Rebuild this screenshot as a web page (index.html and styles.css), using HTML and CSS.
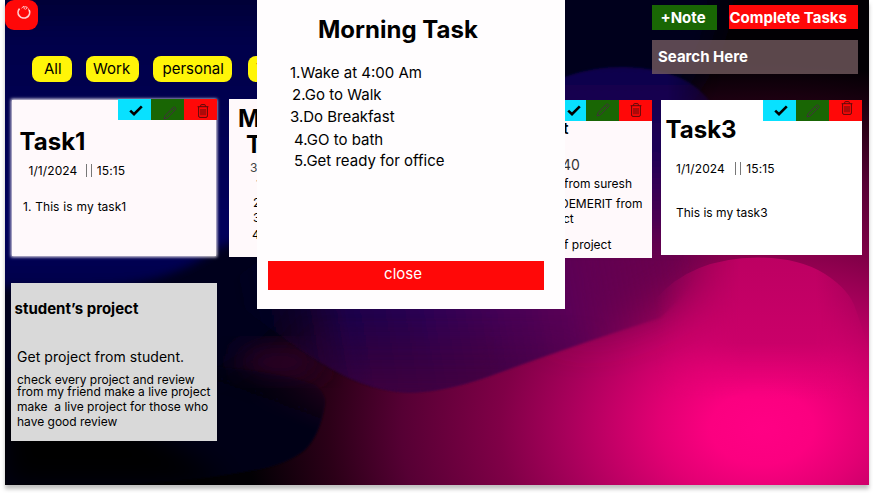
FILE: index.html
```html
<!DOCTYPE html>
<html lang="en">
<head>
<meta charset="utf-8">
<title>Tasks</title>
<link rel="stylesheet" href="styles.css">
</head>
<body>
<svg width="0" height="0" class="defs" aria-hidden="true">
  <symbol id="check" viewBox="0 0 14 11"><path d="M1.2 5.6 5 9.2 12.8 1.4" fill="none" stroke="#000" stroke-width="2.6"/></symbol>
  <symbol id="pen" viewBox="0 0 14 14"><path d="M1 13 2.2 9.4 10.4 1.3Q11.3.6 12.2 1.5L12.6 1.9Q13.4 2.8 12.6 3.6L4.5 11.8ZM9.2 2.6 11.4 4.8" fill="none" stroke="#42303c" stroke-width="1" stroke-linejoin="round"/></symbol>
  <symbol id="trash" viewBox="0 0 12 14"><path d="M.6 2.7H11.4M3.7 2.5V1.4Q3.7.6 4.5.6H7.5Q8.3.6 8.3 1.4V2.5M1.6 2.9V12Q1.6 13.4 3 13.4H9Q10.4 13.4 10.4 12V2.9M4 5V11.3M6 5V11.3M8 5V11.3" fill="none" stroke="#4a0b0b" stroke-width=".9"/></symbol>
</svg>
<main class="app">
  <svg class="backdrop" viewBox="5 0 864 485" preserveAspectRatio="none" aria-hidden="true">
    <defs>
      <radialGradient id="pink" gradientUnits="userSpaceOnUse" cx="0" cy="0" r="1" gradientTransform="translate(762 428) scale(515 365)">
        <stop offset="0" stop-color="#ff0084"/><stop offset=".1" stop-color="#fb0080"/><stop offset=".2" stop-color="#e20073"/><stop offset=".38" stop-color="#a8005b"/><stop offset=".51" stop-color="#800047"/><stop offset=".7" stop-color="#560034"/><stop offset=".84" stop-color="#2c0018"/><stop offset="1" stop-color="#020004"/>
      </radialGradient>
      <linearGradient id="navy" x1="0" y1="0" x2="0" y2="1">
        <stop offset="0" stop-color="#00002e"/><stop offset=".2" stop-color="#00004a"/><stop offset=".8" stop-color="#00005c"/><stop offset="1" stop-color="#00004a"/>
      </linearGradient>
      <linearGradient id="violet" gradientUnits="userSpaceOnUse" x1="240" y1="330" x2="690" y2="250">
        <stop offset="0" stop-color="#0c0028" stop-opacity="0"/><stop offset=".24" stop-color="#1d004a"/><stop offset=".4" stop-color="#2c0052"/><stop offset=".72" stop-color="#5b0056"/><stop offset="1" stop-color="#6c0048" stop-opacity="0"/>
      </linearGradient>
      <linearGradient id="shade" gradientUnits="userSpaceOnUse" x1="0" y1="315" x2="0" y2="392">
        <stop offset="0" stop-color="#48002c" stop-opacity="0"/><stop offset="1" stop-color="#48003a"/>
      </linearGradient>
      <linearGradient id="shadeSide" gradientUnits="userSpaceOnUse" x1="290" y1="0" x2="610" y2="0">
        <stop offset="0" stop-color="#000"/><stop offset=".25" stop-color="#bbb"/><stop offset=".6" stop-color="#bbb"/><stop offset="1" stop-color="#000"/>
      </linearGradient>
      <mask id="shadeMask"><rect x="280" y="290" width="350" height="120" fill="url(#shadeSide)"/></mask>
      <linearGradient id="orb" gradientUnits="userSpaceOnUse" x1="0" y1="67" x2="0" y2="260">
        <stop offset="0" stop-color="#0e004c"/><stop offset=".45" stop-color="#200056"/><stop offset=".8" stop-color="#4c0052"/><stop offset="1" stop-color="#5c0050" stop-opacity="0"/>
      </linearGradient>
      <linearGradient id="orbSide" gradientUnits="userSpaceOnUse" x1="560" y1="0" x2="725" y2="0">
        <stop offset="0" stop-color="#fff"/><stop offset=".65" stop-color="#fff"/><stop offset="1" stop-color="#333"/>
      </linearGradient>
      <mask id="orbMask"><rect x="400" y="0" width="400" height="400" fill="url(#orbSide)"/></mask>
      <linearGradient id="dome" gradientUnits="userSpaceOnUse" x1="0" y1="258" x2="0" y2="400">
        <stop offset="0" stop-color="#bd0062"/><stop offset=".6" stop-color="#ca0069"/><stop offset="1" stop-color="#e80078" stop-opacity="0"/>
      </linearGradient>
      <linearGradient id="domeSide" gradientUnits="userSpaceOnUse" x1="655" y1="0" x2="869" y2="0">
        <stop offset="0" stop-color="#000"/><stop offset=".4" stop-color="#fff"/><stop offset=".75" stop-color="#fff"/><stop offset="1" stop-color="#222"/>
      </linearGradient>
      <mask id="domeMask"><rect x="600" y="200" width="300" height="300" fill="url(#domeSide)"/></mask>
      <linearGradient id="cove" gradientUnits="userSpaceOnUse" x1="290" y1="360" x2="270" y2="415">
        <stop offset="0" stop-color="#00001c" stop-opacity="0"/><stop offset="1" stop-color="#000014"/>
      </linearGradient>
      <filter id="soft" x="-20%" y="-20%" width="140%" height="140%"><feGaussianBlur stdDeviation="14"/></filter>
      <filter id="wide" x="-40%" y="-40%" width="180%" height="180%"><feGaussianBlur stdDeviation="24"/></filter>
      <filter id="mid" x="-20%" y="-20%" width="140%" height="140%"><feGaussianBlur stdDeviation="5"/></filter>
      <filter id="edge"><feGaussianBlur stdDeviation=".8"/></filter>
    </defs>
    <rect width="874" height="485" fill="#000004"/>
    <rect width="874" height="485" fill="url(#pink)"/>
    <path d="M-40-40H720Q730 60 650 130Q530 240 300 310Q280 350 200 390H-40Z" fill="#00001e" filter="url(#soft)"/>
    <path d="M560 180Q620 150 700 220Q720 270 660 300Q600 330 560 320Z" fill="#680050" filter="url(#wide)"/>
    <ellipse cx="280" cy="362" rx="45" ry="18" fill="#2a0028" filter="url(#soft)"/>
    <path d="M220 290Q330 200 565 120L700 140Q740 250 660 318Q590 340 500 372Q450 391 410 392Q370 391 330 368Q290 345 220 290Z" fill="url(#violet)" filter="url(#edge)"/>
    <path d="M300 350L330 368Q370 391 410 392Q450 391 500 372Q550 354 610 335V310H300Z" fill="url(#shade)" mask="url(#shadeMask)" filter="url(#edge)"/>
    <path d="M520 100Q570 66 625 67Q690 69 712 105Q730 170 680 260H500Z" fill="url(#orb)" mask="url(#orbMask)" filter="url(#edge)"/>
    <path d="M-60-20H500Q470 60 380 140Q290 220 215 250Q170 285 90 287H-60Z" fill="url(#navy)" filter="url(#mid)"/>
    <path d="M5 370Q240 355 316 385Q327 395 325 405Q320 435 305 450Q285 466 250 471Q180 484 90 485H5Z" fill="url(#cove)" filter="url(#edge)"/>
    <path d="M5 400H90Q170 440 230 485H5Z" fill="#000" filter="url(#soft)"/>
    <path d="M655 400V300Q690 258 758 257.5Q800 258 825 274Q850 290 856 310Q863 330 869 350V400Z" fill="url(#dome)" mask="url(#domeMask)"/>
  </svg>

  <div class="content">
    <header class="top">
      <div class="logo">
        <svg width="16" height="15" viewBox="0 0 16 15"><path d="M3.6 3.6A5.8 5.6 0 1 0 13.2 5.2" fill="none" stroke="#fff" stroke-width="1.7" opacity=".8"/><path d="M5.5 3.2 7.8 1.2 8.4 4.2M8.6 1.6 11.3 2.2 9.6 4.6M12.2 3.4 13.6 6.4" fill="none" stroke="#fff" stroke-width="1" opacity=".75"/></svg>
      </div>
      <nav class="tabs"><span class="tab all">All</span><span class="tab work">Work</span><span class="tab personal">personal</span><span class="tab more">T</span></nav>
      <div class="tools">
        <div class="buttons"><span class="note">+Note</span><span class="done">Complete Tasks</span></div>
        <div class="search">Search Here</div>
      </div>
    </header>

    <section class="cards">
      <article class="card first">
        <div class="actions"><span class="ok"><svg width="14" height="11"><use href="#check"/></svg></span><span class="edit"><svg width="14" height="14"><use href="#pen"/></svg></span><span class="del"><svg width="12" height="14"><use href="#trash"/></svg></span></div>
        <h2>Task1</h2>
        <p class="date"><span>1/1/2024</span><i></i><span>15:15</span></p>
        <p class="body">1. This is my task1</p>
      </article>
      <article class="card second">
        <h2>Morning</h2><h2 class="sub">Task</h2>
        <p class="when">3/1/2024</p>
        <p class="l1">1.Wake</p><p class="l2">2.Go to Walk</p><p class="l3">3.Do Breakfast</p><p class="l4">4.GO to bath</p>
      </article>
      <article class="card third">
        <div class="actions"><span class="ok"><svg width="14" height="11"><use href="#check"/></svg></span><span class="edit"><svg width="14" height="14"><use href="#pen"/></svg></span><span class="del"><svg width="12" height="14"><use href="#trash"/></svg></span></div>
        <h3>t</h3>
        <p class="time">40</p>
        <p class="a">from suresh</p><p class="b">DEMERIT from</p><p class="c">ct</p><p class="d">f project</p>
      </article>
      <article class="card fourth">
        <div class="actions"><span class="ok"><svg width="14" height="11"><use href="#check"/></svg></span><span class="edit"><svg width="14" height="14"><use href="#pen"/></svg></span><span class="del"><svg width="12" height="14"><use href="#trash"/></svg></span></div>
        <h2>Task3</h2>
        <p class="date"><span>1/1/2024</span><i></i><span>15:15</span></p>
        <p class="body">This is my task3</p>
      </article>
      <article class="card student">
        <h3>student’s project</h3>
        <p class="lead">Get project from student.</p>
        <p class="s1">check every project and review</p>
        <p class="s2">from my friend make a live project</p>
        <p class="s3">make&nbsp; a live project for those who</p>
        <p class="s4">have good review</p>
      </article>
    </section>
  </div>

  <div class="modal">
    <h1>Morning Task</h1>
    <ol>
      <li>1.Wake at 4:00 Am</li>
      <li class="in">2.Go to Walk</li>
      <li class="third-item">3.Do Breakfast</li>
      <li class="in2 fourth-item">4.GO to bath</li>
      <li class="in2">5.Get ready for office</li>
    </ol>
    <div class="close">close</div>
  </div>
</main>
</body>
</html>
```
FILE: styles.css
```css
* { box-sizing: border-box; }
body, h1, h2, h3, p, ol { margin: 0; padding: 0; }
body { background: #fff; font-family: Inter, sans-serif; color: #000; overflow: hidden; height: 493px; }
ol { list-style: none; }
svg { display: block; }
.defs { position: absolute; }
.app { position: relative; width: 864px; height: 485px; margin-left: 5px; box-shadow: 0 4px 4px rgba(0,0,0,.25); }
.backdrop { position: absolute; inset: 0; width: 864px; height: 485px; }
.content { position: relative; z-index: 0; }

.top { display: flex; height: 99px; }
.logo { width: 33px; height: 30px; background: #ff0808; border-radius: 9px; padding: 5px 0 0 11px; }
.tabs { display: flex; align-items: flex-start; padding-top: 56px; margin-left: -6px; width: 620px; }
.tab { height: 26px; line-height: 26px; background: #fff508; border-radius: 8px; font-size: 15px; white-space: nowrap; }
.all { width: 40px; margin-right: 14px; padding-left: 12px; }
.work { width: 53px; margin-right: 14px; padding-left: 7px; }
.personal { width: 79px; margin-right: 16px; padding-left: 9.5px; }
.more { width: 60px; padding-left: 8px; }
.tools { width: 206px; padding-top: 5px; color: #fff; font-size: 15px; font-weight: 700; }
.buttons { display: flex; justify-content: space-between; height: 35px; white-space: nowrap; }
.note { width: 65px; height: 25px; line-height: 25px; padding-left: 8.5px; background: #196604; }
.done { width: 129px; height: 24px; line-height: 25px; padding-left: .5px; background: #ff0808; }
.search { height: 34px; line-height: 34px; padding-left: 6px; background: rgba(116,91,96,.78); }

.cards { display: grid; grid-template-columns: 218px 217px 215px 201px; grid-template-rows: 158px 158px; row-gap: 26px; padding-left: 6px; }
.card { width: 206px; height: 158px; background: #fff9fb; white-space: nowrap; overflow: hidden; font-size: 12px; line-height: 15px; }
.first { position: relative; overflow: visible; background: none; }
.first::before { content: ""; position: absolute; z-index: -1; inset: 1px; background: #fff9fb; box-shadow: 0 0 3px 1px #fff9fb; }
.third, .fourth { margin-top: 1px; }
.fourth { width: 201px; height: 155px; background: #fff; }
.actions { display: flex; justify-content: flex-end; height: 21px; }
.actions span { width: 33px; height: 21px; flex: none; }
.ok { background: #08e1ff; padding: 6px 0 0 11px; }
.edit { background: #196604; padding: 7px 0 0 12px; }
.del { background: #ff0808; padding: 5px 0 0 13px; }
.third .ok { padding: 5px 0 0 14px; }
.third .edit { padding: 3px 0 0 10px; }
.third .del { padding: 3px 0 0 11px; }
h2 { font-size: 24px; line-height: 29px; font-weight: 700; }
.first h2 { margin: 7px 0 0 8.5px; }
.date { display: flex; }
.date i { width: 6px; height: 13px; margin: 1px 5px 0 8.5px; border: solid #777; border-width: 0 1px; }
.first .date { margin: 7px 0 0 17.5px; letter-spacing: .08px; }
.first .body { margin: 21px 0 0 12px; word-spacing: .6px; }
.second h2 { margin: 5px 0 0 9px; height: 26px; }
.second h2.sub { margin: 0 0 0 17px; }
.second .when { margin: 4px 0 0 21px; color: #444; }
.l1 { margin-left: 27px; margin-top: 1px; color: #777; }
.l2 { margin: 4px 0 0 24px; }
.l3 { margin-left: 24px; }
.l4 { margin: 2px 0 0 23px; }
.third h3 { font-size: 15px; line-height: 18px; margin: -1px 0 0 117px; }
.time { font-size: 14px; line-height: 17px; margin: 18px 0 0 116px; color: #333; }
.a { margin: 3px 0 0 118px; }
.b { margin: 5px 0 0 114px; }
.c { margin-left: 117px; }
.d { margin: 11px 0 0 118px; }
.fourth .edit { padding: 4px 0 0 10px; }
.fourth .ok { padding-top: 5px; }
.fourth .del { padding: 1px 0 0 12px; }
.fourth h2 { margin: -6px 0 0 4.5px; }
.fourth .date { margin: 17px 0 0 15px; letter-spacing: .08px; }
.fourth .date i { margin-left: 10.5px; }
.fourth .body { margin: 29px 0 0 15px; }
.student { background: #d9d9d9; }
.student h3 { font-size: 15px; line-height: 18px; margin: 17px 0 0 3.5px; }
.lead { font-size: 14px; line-height: 17px; margin: 30px 0 0 6px; letter-spacing: .05px; }
.s1, .s2, .s3, .s4 { margin-left: 6px; }
.s1, .s2 { line-height: 12px; }
.s1 { margin-top: 9px; }
.s3 { margin-top: 1px; }

.modal { position: absolute; z-index: 1; left: 252px; top: 0; width: 308px; height: 309px; background: #fffdfe; padding: 15px 0 0 11px; }
h1 { font-size: 24px; line-height: 29px; margin-left: 50px; }
ol { height: 217px; padding: 20px 0 0 22px; font-size: 15px; }
li { height: 22px; line-height: 18px; }
.third-item { height: 23px; }
.fourth-item { height: 21px; }
.in { padding-left: 2px; }
.in2 { padding-left: 4px; }
.close { width: 276px; height: 29px; line-height: 26px; text-align: center; background: #ff0808; color: #fff; font-size: 15px; padding-right: 6px; }
```
